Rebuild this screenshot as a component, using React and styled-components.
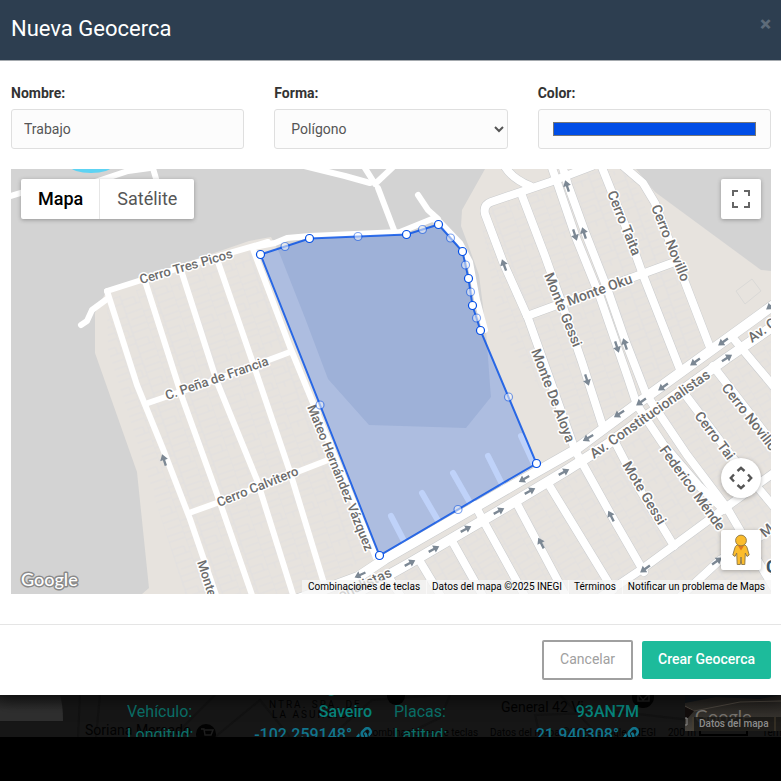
import React, { useState } from 'react';
import styled, { createGlobalStyle } from 'styled-components';
import { FaLink } from 'react-icons/fa';

const GlobalStyle = createGlobalStyle`
  * {
    box-sizing: border-box;
  }

  body {
    margin: 0;
    background: #000;
    font-family: Roboto, 'Liberation Sans', sans-serif;
    font-size: 14px;
    color: #333;
  }

  button, input, select {
    font-family: inherit;
  }
`;

const Modal = styled.form`
  position: relative;
  z-index: 1;
  background: #fff;
  box-shadow: 0 5px 15px rgba(0, 0, 0, 0.5);
`;

const ModalHeader = styled.header`
  display: flex;
  justify-content: space-between;
  align-items: flex-start;
  height: 61px;
  padding: 14px 10px 0 11px;
  background: #2d3e50;
  border-bottom: 1px solid #a4a9ae;
`;

const Title = styled.h1`
  margin: 0;
  font-size: 22px;
  font-weight: 400;
  line-height: 30px;
  color: #fff;
`;

const CloseButton = styled.button`
  padding: 0;
  border: none;
  background: none;
  color: #5d6b79;
  font-size: 21px;
  font-weight: 900;
  line-height: 20px;
  cursor: pointer;
`;

const ModalBody = styled.div`
  padding: 22px 10px 30px 11px;
`;

const Fields = styled.div`
  display: grid;
  grid-template-columns: repeat(3, 1fr);
  gap: 30px;
  margin-bottom: 20px;
`;

const Field = styled.div`
  display: flex;
  flex-direction: column;
  gap: 6px;
`;

const Label = styled.label`
  font-weight: 700;
  line-height: 20px;
`;

const Input = styled.input`
  width: 100%;
  height: 40px;
  padding: 8px 12px;
  border: 1px solid #dfdfdf;
  border-radius: 3px;
  background: #fcfcfc;
  color: #555;
  font-size: 14px;
`;

const MapFrame = styled.div`
  position: relative;
  height: 425px;
  overflow: hidden;
  background: #d3d3d3;
`;

const MapCanvas = styled.svg`
  display: block;
  width: 100%;
  height: 100%;
`;

const RoadLabel = styled.text`
  font-family: Roboto, sans-serif;
  font-size: ${({ $size }) => $size || 13}px;
  font-weight: 500;
  fill: #6c6c6c;
  stroke: #fff;
  stroke-width: 3px;
  stroke-linejoin: round;
  paint-order: stroke;
`;

const MapTypes = styled.div`
  position: absolute;
  top: 10px;
  left: 10px;
  display: flex;
  border-radius: 2px;
  background: #fff;
  box-shadow: 0 1px 4px rgba(0, 0, 0, 0.3);
`;

const MapTypeButton = styled.button`
  height: 40px;
  padding: 0 17px 2px;
  border: none;
  background: none;
  box-shadow: ${({ $active }) => ($active ? 'inset -1px 0 0 #e6e6e6' : 'none')};
  color: ${({ $active }) => ($active ? '#000' : '#565656')};
  font-size: 18px;
  font-weight: ${({ $active }) => ($active ? 500 : 400)};
  cursor: pointer;
`;

const MapControl = styled.button`
  position: absolute;
  right: 10px;
  ${({ $top }) => ($top ? `top: ${$top}` : '')};
  ${({ $bottom }) => ($bottom ? `bottom: ${$bottom}` : '')};
  display: flex;
  align-items: center;
  justify-content: center;
  width: 40px;
  height: 40px;
  padding: 0;
  border: none;
  border-radius: ${({ $round }) => ($round ? '50%' : '2px')};
  background: #fff;
  box-shadow: 0 1px 4px rgba(0, 0, 0, 0.3);
  cursor: pointer;
`;

const GoogleLogo = styled.svg`
  position: absolute;
  left: 6px;
  bottom: 0;
`;

const Attribution = styled.div`
  position: absolute;
  right: 0;
  bottom: 0;
  display: flex;
  height: 14px;
  line-height: 14px;
  font-size: 10px;
  color: #000;
`;

const AttributionItem = styled.span`
  padding: 0 6px;
  background: rgba(245, 245, 245, 0.75);

  & + & {
    border-left: 1px solid rgba(255, 255, 255, 0.5);
    padding-left: 5px;
  }

  a, button {
    padding: 0;
    border: none;
    background: none;
    color: inherit;
    font-size: inherit;
    line-height: inherit;
    text-decoration: none;
    cursor: pointer;
  }
`;

const ModalFooter = styled.footer`
  display: flex;
  justify-content: flex-end;
  align-items: center;
  gap: 9px;
  padding: 15px 10px;
  border-top: 1px solid #e5e5e5;
`;

const CancelButton = styled.button`
  height: 40px;
  padding: 0 16px 2px;
  border: 2px solid #a0a0a0;
  border-radius: 2px;
  background: #fff;
  color: #a0a0a0;
  font-size: 14px;
  cursor: pointer;
`;

const SubmitButton = styled.button`
  height: 38px;
  padding: 0 16px 2px;
  border: none;
  border-radius: 2px;
  background: #1dbb9b;
  color: #fff;
  font-size: 14px;
  font-weight: 500;
  cursor: pointer;
`;

const Behind = styled.section`
  position: relative;
  height: 42px;
  overflow: hidden;
  background: #161616;
`;

const BehindMap = styled.svg`
  position: absolute;
  inset: 0;
  width: 100%;
  height: 100%;
`;

const VehicleInfo = styled.dl`
  position: relative;
  display: grid;
  grid-template-columns: 1fr 1fr;
  column-gap: 22px;
  margin: 5px 142px 0 127px;
  font-size: 16px;
  line-height: 23px;
`;

const InfoPair = styled.div`
  display: flex;
  justify-content: space-between;
  color: #0a6f68;

  dd {
    display: flex;
    align-items: center;
    gap: 4px;
    margin: 0;
    font-weight: 500;
    color: ${({ $link }) => ($link ? '#11748c' : '#07857d')};
  }
`;

// Land that is not built up
const greyAreas = [
  '11,169 485,169 462,210 461,226 470,250 479,275 486,330 490,385 491,397 466,428 369,425 328,379 305,318 279,252 271,237 249,241 107,290 95,313 95,353 107,387 137,472 149,588 142,594 11,594',
  '636,169 655,192 761,270 771,271 771,169',
];

// Built-up blocks that carry the faint lot lines
const westBlocks = '107,300 250,252 372,556 300,594 185,594 108,350';
const northBlocks = '480,215 500,200 590,170 630,172 705,345 575,440 500,330';
const southBlocks = '400,575 771,340 771,594 400,594';

const localRoads = [
  'M11 196 L50 184 L95 182 L128 171 L150 168',
  'M152 165 L157 182',
  'M300 165 L345 176 L370 183',
  'M363 165 L375 184 L393 167',
  'M378 188 L394 230',
  'M418 195 L428 210 L438 219',
  'M254 247 L275 243 L287 238 L310 236 L400 232 L432 219 L440 222 L460 243 L470 262 L477 300 L485 330',
  'M107 291 L195 263 L268 242',
  'M107 299 L92 310 L87 321 L81 325',
  'M107 291 L137 385 L163 449 L190 519 L217 598',
  'M145 281 L183 400 L217 494 L253 598',
  'M181 270 L217 382 L257 480 L294 598',
  'M217 259 L256 372 L290 472 L326 590',
  'M253 249 L290 347 L313 403 L377 560',
  'M148 403 L215 380 L290 352',
  'M189 513 L225 500 L328 460',
];

const casedRoads = [
  'M503 163 Q510 178 530 186',
  'M575 450 L528 318 L503 262 L485 214 Q483 205 491 202 L550 182 L592 166',
  'M521 193 L545 256 L560 298 L582 362 L602 424',
  'M527 316 L672 263',
  'M551 165 L558 185 L575 235 L600 297 L628 378 L637 405',
  'M562 165 L568 185 L585 232 L607 288 L625 340 L646 394',
  'M601 165 L625 225 L643 275 L681 372',
  'M622 165 L643 183 L655 203 L686 285 L711 350',
  'M388 576 L402 598',
  'M418 558 L442 598',
  'M452 541 L484 598',
  'M475 505 L484 522 L526 598',
  'M516 502 L567 598',
  'M549 485 L613 590',
  'M575 450 L610 513 L644 572',
  'M616 444 L640 490 L674 546',
  'M637 405 L663 444 L700 487 L724 510',
  'M646 394 L687 455 L727 508 L775 590',
  'M684 393 L733 458 L775 508',
  'M713 366 L775 446',
  'M733 338 L775 388',
  'M590 604 L642 569 L725 508 L775 472',
  'M670 606 L720 560 L775 528',
];

const avenues = [
  'M290 602 L358 577 L385 559 L524 479 L575 450 L641 401 L775 304',
  'M330 608 L410 563 L499 511 L564 472 L605 446 L727 358 L775 325',
];

const stubs = [
  'M391 516 L406 545',
  'M422 493 L440 524',
  'M453 473 L473 508',
  'M488 456 L504 488',
  'M521 436 L534 464',
];

const roadLabels = [
  { text: 'Cerro Tres Picos', x: 141, y: 284, angle: -16 },
  { text: 'C. Peña de Francia', x: 167, y: 400, angle: -19 },
  { text: 'Cerro Calvitero', x: 219, y: 507, angle: -22 },
  { text: 'Mateo Hernández Vázquez', x: 307, y: 407, angle: 68 },
  { text: 'Monte', x: 197, y: 562, angle: 72 },
  { text: 'Cerro Taita', x: 607, y: 193, angle: 68, size: 14 },
  { text: 'Cerro Novillo', x: 651, y: 207, angle: 68, size: 14 },
  { text: 'Monte Oku', x: 569, y: 306, angle: -20, size: 14 },
  { text: 'Monte Gessi', x: 544, y: 275, angle: 68, size: 14 },
  { text: 'Monte De Aloya', x: 531, y: 351, angle: 69, size: 14 },
  { text: 'Av. Constitucionalistas', x: 594, y: 459, angle: -35, size: 14 },
  { text: 'Av. C', x: 752, y: 343, angle: -35, size: 14 },
  { text: 'Cerro Tai', x: 694, y: 416, angle: 53, size: 14 },
  { text: 'Cerro Novillo', x: 721, y: 388, angle: 52, size: 14 },
  { text: 'Mote Gessi', x: 622, y: 465, angle: 59, size: 14 },
  { text: 'Federico Ménde', x: 659, y: 450, angle: 54, size: 14 },
  { text: 'onalistas', x: 341, y: 600, angle: -25, size: 14 },
  { text: 'M', x: 765, y: 538, angle: -40, size: 14 },
];

const roadArrows = [
  [164, 460, -18], [504, 265, -20], [567, 186, -18], [575, 235, 162], [584, 233, -18],
  [617, 347, 162], [625, 344, -18], [587, 380, 162], [524, 479, -120], [588, 438, -120],
  [619, 414, -122], [641, 402, -125], [663, 387, -125], [695, 362, -125], [723, 342, -125],
  [771, 306, -125], [360, 575, -115], [410, 563, 62], [434, 549, 62], [466, 529, 62],
  [499, 511, 62], [530, 491, 62], [564, 472, 62], [727, 358, 58], [541, 543, -27],
  [611, 516, -27], [645, 569, -125], [717, 561, 55],
];

const vertices = [
  [260.5, 254.5], [309.5, 238.5], [406.5, 234.5], [438.5, 224.5], [462.5, 251.5],
  [468.5, 278.5], [472.5, 305.5], [480.5, 330.5], [536.5, 463.5], [379.5, 555.5],
];

const midpoints = vertices.map(([x, y], i) => {
  const [nx, ny] = vertices[(i + 1) % vertices.length];
  return [(x + nx) / 2, (y + ny) / 2];
});

const LotPattern = ({ id, angle }) => (
  <pattern id={id} width="34" height="42" patternUnits="userSpaceOnUse" patternTransform={`rotate(${angle})`}>
    <path
      d="M0 0V42 M17 0V42 M0 5H17 M0 12H17 M0 18H13 M0 25H17 M0 33H17 M17 2H34 M20 9H34 M17 16H34 M17 22H34 M17 30H30 M17 37H34 M13 18V25 M30 30V37 M8 33V39"
      fill="none"
      stroke="#dedee0"
      strokeWidth="0.6"
    />
  </pattern>
);

const GeofenceMap = ({ color }) => (
  <MapCanvas viewBox="11 169 760 425" preserveAspectRatio="xMidYMid slice" role="img" aria-label="Mapa de la geocerca">
    <defs>
      <LotPattern id="lots-west" angle={-19} />
      <LotPattern id="lots-north" angle={-20} />
      <LotPattern id="lots-south" angle={-31} />
    </defs>
    <rect x="11" y="169" width="760" height="425" fill="#e7e3de" />
    <polygon points={westBlocks} fill="url(#lots-west)" />
    <polygon points={northBlocks} fill="url(#lots-north)" />
    <polygon points={southBlocks} fill="url(#lots-south)" />
    {greyAreas.map((points) => <polygon key={points} points={points} fill="#d3d3d3" />)}
    <path d="M736 291 L752 279 L761 291 L745 304 Z" fill="none" stroke="#dad9d7" />
    <ellipse cx="91" cy="166" rx="21" ry="7" fill="#5ed3f3" />

    <g fill="none" strokeLinecap="round" strokeLinejoin="round">
      <g stroke="#fff" strokeWidth="6">
        {localRoads.map((d) => <path key={d} d={d} />)}
        {stubs.map((d) => <path key={d} d={d} />)}
      </g>
      <g stroke="#c9cbcd">
        <g strokeWidth="9">{casedRoads.map((d) => <path key={d} d={d} />)}</g>
        <g strokeWidth="11">{avenues.map((d) => <path key={d} d={d} />)}</g>
      </g>
      <g stroke="#fff">
        <g strokeWidth="8">{casedRoads.map((d) => <path key={d} d={d} />)}</g>
        <g strokeWidth="10">{avenues.map((d) => <path key={d} d={d} />)}</g>
      </g>
    </g>

    {roadArrows.map(([x, y, angle]) => (
      <path
        key={`${x}-${y}`}
        d="M0 -6 L4 0 H1.2 V6 H-1.2 V0 H-4 Z"
        transform={`translate(${x} ${y}) rotate(${angle})`}
        fill="#7c8894"
      />
    ))}

    {roadLabels.map(({ text, x, y, angle, size }) => (
      <RoadLabel key={`${text}-${x}`} $size={size} transform={`translate(${x} ${y}) rotate(${angle})`}>{text}</RoadLabel>
    ))}
    <text x="766" y="573" fontFamily="Roboto, sans-serif" fontSize="18" fontWeight="700" fill="#3d5566" stroke="#fff" strokeWidth="3" paintOrder="stroke">C</text>

    <polygon
      points={vertices.map((v) => v.join(',')).join(' ')}
      fill={color}
      fillOpacity="0.25"
      stroke={color}
      strokeOpacity="0.8"
      strokeWidth="2"
    />
    <g fill="#fff" stroke={color} strokeWidth="1.2">
      {midpoints.map(([x, y]) => <circle key={`${x}-${y}`} cx={x} cy={y} r="4" opacity="0.5" />)}
      {vertices.map(([x, y]) => <circle key={`${x}-${y}`} cx={x} cy={y} r="4" />)}
    </g>
  </MapCanvas>
);

const FullscreenIcon = () => (
  <svg width="18" height="18" viewBox="0 0 18 18" fill="#666">
    <path d="M0 0v6h2V2h4V0H0zm16 0h-4v2h4v4h2V0h-2zm0 16h-4v2h6v-6h-2v4zM2 12H0v6h6v-2H2v-4z" />
  </svg>
);

const CameraIcon = () => (
  <svg width="24" height="24" viewBox="0 0 24 24" fill="none" stroke="#555" strokeWidth="2.4">
    <path d="M8.5 5 L12 1.8 L15.5 5 M19 8.5 L22.2 12 L19 15.5 M15.5 19 L12 22.2 L8.5 19 M5 15.5 L1.8 12 L5 8.5" />
  </svg>
);

const PegmanIcon = () => (
  <svg width="20" height="32" viewBox="0 0 20 32" fill="#fbbc2c" stroke="#8b7544" strokeWidth="0.9">
    <path d="M6 11 L14 11 Q16 12 16.5 15 L18.2 21 L16 22.5 L14.3 19 L13.8 30.5 H10.7 L10 23 L9.3 30.5 H6.2 L5.7 19 L4 22.5 L1.8 21 L3.5 15 Q4 12 6 11 Z" />
    <path d="M6.8 11.5 H13.2 L10 16.5 Z" fill="#e0771c" stroke="none" />
    <circle cx="10" cy="6.5" r="5.4" />
  </svg>
);

const BackgroundMap = () => (
  <BehindMap viewBox="0 695 781 42" preserveAspectRatio="xMidYMid slice" aria-hidden="true">
    <defs>
      <linearGradient id="panel-shade" x1="0" y1="0" x2="0" y2="1">
        <stop offset="0" stopColor="#1d1d1d" />
        <stop offset="0.6" stopColor="#2f2f2f" />
      </linearGradient>
      <linearGradient id="street-shade" x1="0" y1="0" x2="0" y2="1">
        <stop offset="0" stopColor="#1c1a18" />
        <stop offset="1" stopColor="#45413b" />
      </linearGradient>
    </defs>
    <g fill="none" stroke="#121212" strokeWidth="2">
      <path d="M80 695 L78 737 M100 695 L96 737 M170 740 L215 695 M215 737 L260 700 L290 737 M330 737 L372 700 L440 695 M400 737 L440 718 L450 695 M540 737 L535 715 L620 712 L690 720 M560 695 L600 737" />
    </g>
    <path d="M0 695 H60 Q63 705 63 721 H0 Z" fill="url(#panel-shade)" />
    <g fill="#020202" fontFamily="Roboto, sans-serif">
      <text x="269" y="708" fontSize="10" letterSpacing="2">NTRA. SRA. DE</text>
      <text x="272" y="718" fontSize="10" letterSpacing="2">LA ASUNCIÓN</text>
      <text x="85" y="735" fontSize="14">Soriana Mercado</text>
      <text x="501" y="712" fontSize="14">General 42 Vi</text>
      <text x="366" y="736" fontSize="10">Combinaciones de teclas</text>
      <text x="490" y="736" fontSize="10">Datos del mapa ©2025 Google, INEGI</text>
      <text x="668" y="736" fontSize="10">200 m</text>
      <text x="762" y="736" fontSize="10">Térm</text>
      <circle cx="206" cy="734" r="10" />
      <circle cx="396" cy="696" r="9" />
      <circle cx="643" cy="697" r="11" />
      <path d="M700 730 V735 H747 V730" fill="none" stroke="#000" strokeWidth="2" />
    </g>
    <path d="M201 729 h3 l1 6 h6 l2 -5 h-8 M638 694 l5 6 l6 -6 v7 h-11 z" fill="none" stroke="#1e1e1e" strokeWidth="1.5" />
    <text x="327" y="693" fill="#07857d" fontFamily="Roboto, sans-serif" fontSize="16" fontWeight="500">g</text>
    <rect x="685" y="695" width="96" height="36" fill="url(#street-shade)" />
    <path d="M685 695 H781 L760 699 L716 697 L685 703 Z" fill="#101519" />
    <path d="M694 711 L740 702 L781 701 M685 706 L694 711" fill="none" stroke="#4a443d" />
    <path d="M685 707 L694 711 L688 718 L685 718 Z" fill="#120d0c" />
    <path d="M685 718 H687 V725 H685" fill="none" stroke="#888" />
    <text x="695" y="723" fontFamily="Lato, sans-serif" fontSize="18" fill="#77736e">Google</text>
    <rect x="694" y="717" width="87" height="14" fill="#171513" fillOpacity="0.8" />
    <text x="699" y="727" fontFamily="Roboto, sans-serif" fontSize="10" fontWeight="500" fill="#8c8c8c">Datos del mapa</text>
    <path d="M693 717 V731 M775 717 V731" stroke="#4b402f" />
  </BehindMap>
);

const App = () => {
  const [name, setName] = useState('Trabajo');
  const [shape, setShape] = useState('poligono');
  const [color, setColor] = useState('#004de6');
  const [mapType, setMapType] = useState('Mapa');

  return (
    <>
      <GlobalStyle />
      <Modal onSubmit={(e) => e.preventDefault()}>
        <ModalHeader>
          <Title>Nueva Geocerca</Title>
          <CloseButton type="button" aria-label="Cerrar">×</CloseButton>
        </ModalHeader>

        <ModalBody>
          <Fields>
            <Field>
              <Label htmlFor="nombre">Nombre:</Label>
              <Input id="nombre" type="text" value={name} onChange={(e) => setName(e.target.value)} />
            </Field>
            <Field>
              <Label htmlFor="forma">Forma:</Label>
              <Input as="select" id="forma" value={shape} onChange={(e) => setShape(e.target.value)}>
                <option value="poligono">Polígono</option>
              </Input>
            </Field>
            <Field>
              <Label htmlFor="color">Color:</Label>
              <Input id="color" type="color" value={color} onChange={(e) => setColor(e.target.value)} />
            </Field>
          </Fields>

          <MapFrame>
            <GeofenceMap color={color} />
            <MapTypes>
              {['Mapa', 'Satélite'].map((type) => (
                <MapTypeButton key={type} type="button" $active={type === mapType} onClick={() => setMapType(type)}>
                  {type}
                </MapTypeButton>
              ))}
            </MapTypes>
            <MapControl type="button" $top="10px" aria-label="Pantalla completa"><FullscreenIcon /></MapControl>
            <MapControl type="button" $bottom="96px" $round aria-label="Controles de cámara"><CameraIcon /></MapControl>
            <MapControl type="button" $bottom="24px" aria-label="Street View"><PegmanIcon /></MapControl>
            <GoogleLogo width="66" height="26" viewBox="0 0 66 26" role="img" aria-label="Google">
              <text x="4" y="18" fontFamily="Lato, sans-serif" fontSize="18" fontWeight="500" fill="#fff" stroke="#8a8a8a" strokeWidth="3" strokeLinejoin="round" paintOrder="stroke">Google</text>
            </GoogleLogo>
            <Attribution>
              <AttributionItem><button type="button">Combinaciones de teclas</button></AttributionItem>
              <AttributionItem>Datos del mapa ©2025 INEGI</AttributionItem>
              <AttributionItem><a href="#terminos">Términos</a></AttributionItem>
              <AttributionItem><a href="#notificar">Notificar un problema de Maps</a></AttributionItem>
            </Attribution>
          </MapFrame>
        </ModalBody>

        <ModalFooter>
          <CancelButton type="button">Cancelar</CancelButton>
          <SubmitButton type="submit">Crear Geocerca</SubmitButton>
        </ModalFooter>
      </Modal>

      <Behind>
        <BackgroundMap />
        <VehicleInfo>
          <InfoPair><dt>Vehículo:</dt><dd>Saveiro</dd></InfoPair>
          <InfoPair><dt>Placas:</dt><dd>93AN7M</dd></InfoPair>
          <InfoPair $link><dt>Longitud:</dt><dd>-102.259148° <FaLink size={16} /></dd></InfoPair>
          <InfoPair $link><dt>Latitud:</dt><dd>21.940308° <FaLink size={16} /></dd></InfoPair>
        </VehicleInfo>
      </Behind>
    </>
  );
};

export default App;
